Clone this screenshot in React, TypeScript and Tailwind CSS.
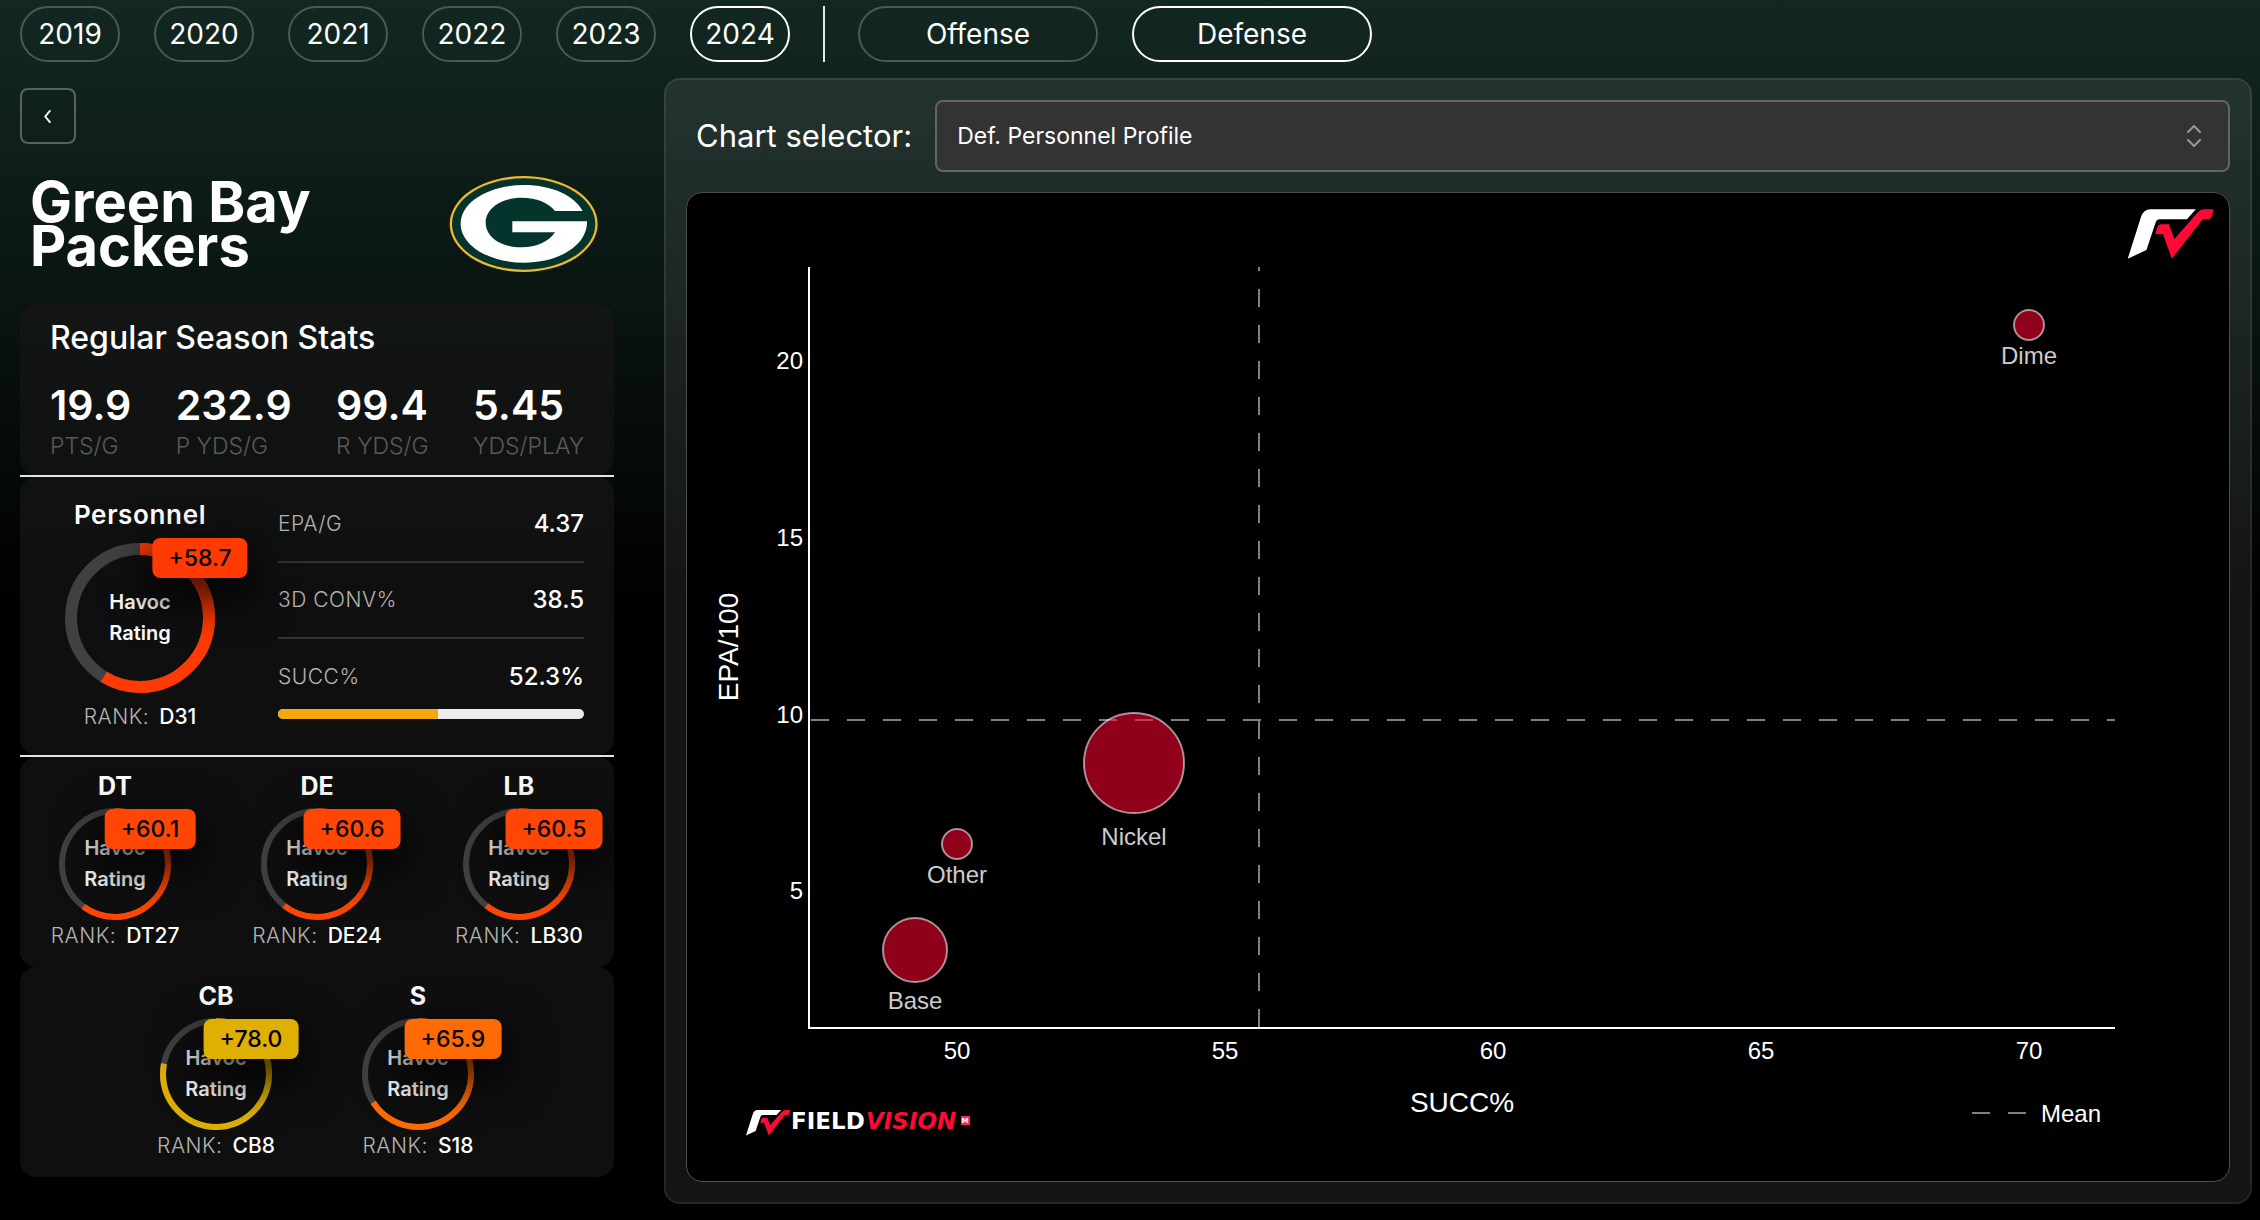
import { useState } from "react";

const YEARS = ["2019", "2020", "2021", "2022", "2023", "2024"];
const SIDES = ["Offense", "Defense"];

const SEASON_STATS = [
  { value: "19.9", label: "PTS/G" },
  { value: "232.9", label: "P YDS/G" },
  { value: "99.4", label: "R YDS/G" },
  { value: "5.45", label: "YDS/PLAY" },
];

const POSITIONS_FRONT = [
  { name: "DT", value: 60.1, rank: "DT27", color: "#ff4605" },
  { name: "DE", value: 60.6, rank: "DE24", color: "#ff4605" },
  { name: "LB", value: 60.5, rank: "LB30", color: "#ff4605" },
];

const POSITIONS_BACK = [
  { name: "CB", value: 78.0, rank: "CB8", color: "#dfaf04" },
  { name: "S", value: 65.9, rank: "S18", color: "#ff6a04" },
];

const BUBBLES = [
  { name: "Dime", x: 1342, y: 133, r: 15, labelY: 172 },
  { name: "Nickel", x: 447, y: 571, r: 50, labelY: 653 },
  { name: "Other", x: 270, y: 652, r: 15, labelY: 691 },
  { name: "Base", x: 228, y: 758, r: 32, labelY: 817 },
];

const X_TICKS = [
  { label: "50", x: 270 },
  { label: "55", x: 538 },
  { label: "60", x: 806 },
  { label: "65", x: 1074 },
  { label: "70", x: 1342 },
];

const Y_TICKS = [
  { label: "20", y: 177 },
  { label: "15", y: 354 },
  { label: "10", y: 531 },
  { label: "5", y: 707 },
];

const pillBase =
  "h-14 rounded-[28px] border-2 text-[28px] leading-8 text-white flex items-center justify-center shrink-0";

const card = "rounded-2xl bg-[#171717]/65";

function FvMark({ className }: { className?: string }) {
  return (
    <svg viewBox="262 416 262 152" className={className} aria-hidden="true">
      <FvShapes />
    </svg>
  );
}

function FvShapes() {
  return (
    <>
      <path
        fill="#fff"
        d="M263 567 L303 441 Q311 417 332 417 H470 L443 447 H360 Q351 447 348 456 L320 541 Z"
      />
      <path
        fill="#ff0a37"
        d="M347 492 L353 472 Q356 462 366 462 H388 L405 507 L476 426 Q484 417 494 417 H523 L520 436 Q517 447 505 447 H491 L397 567 L370 492 Z"
      />
    </>
  );
}

function PackersLogo() {
  return (
    <svg viewBox="0 0 504 348" className="h-[116px] w-[168px] shrink-0" role="img" aria-label="Green Bay Packers">
      <ellipse cx="251" cy="174" rx="222" ry="144" fill="#ecb731" />
      <ellipse cx="251" cy="174" rx="215" ry="137" fill="#04342c" />
      <path
        fill="#fff"
        d="M428 135 H345 C325 110 290 95 245 95 C182 95 137 128 137 170 C137 212 182 244 245 244 C290 244 327 226 345 199 H217 V166 H441 C443 236 358 290 252 290 C147 290 62 238 62 173 C62 108 147 57 252 57 C336 57 404 89 428 135 Z"
      />
    </svg>
  );
}

function Ring({
  size,
  stroke,
  value,
  color,
  badgeClass,
}: {
  size: number;
  stroke: number;
  value: number;
  color: string;
  badgeClass: string;
}) {
  const r = (size - stroke) / 2;
  const c = 2 * Math.PI * r;
  return (
    <div className="relative flex items-center justify-center">
      <svg width={size} height={size} viewBox={`0 0 ${size} ${size}`} aria-hidden="true">
        <circle cx={size / 2} cy={size / 2} r={r} fill="none" stroke="#414141" strokeWidth={stroke} />
        <circle
          cx={size / 2}
          cy={size / 2}
          r={r}
          fill="none"
          stroke={color}
          strokeWidth={stroke}
          strokeDasharray={`${(c * value) / 100} ${c}`}
          transform={`rotate(-90 ${size / 2} ${size / 2})`}
        />
      </svg>
      <div className="absolute inset-0 flex items-center justify-center text-center text-[20px] leading-[31px] font-semibold text-white">
        Havoc
        <br />
        Rating
      </div>
      <div
        className={`absolute flex h-10 -translate-x-1/2 items-center rounded-lg px-4 text-[23px] leading-8 font-medium text-black shadow-[0_16px_40px_8px_rgba(0,0,0,0.75)] ${badgeClass}`}
        style={{ backgroundColor: color }}
      >
        +{value.toFixed(1)}
      </div>
    </div>
  );
}

function Rank({ rank }: { rank: string }) {
  return (
    <p className="flex gap-2.5 text-[21px] leading-8 font-medium text-white">
      <span className="font-light tracking-wide text-[#b4b4b4]">RANK:</span>
      {rank}
    </p>
  );
}

function Position({ name, value, rank, color }: (typeof POSITIONS_FRONT)[number]) {
  return (
    <div className="flex shrink-0 basis-[34%] flex-col items-center pt-[13px]">
      <h3 className="mb-1.5 text-[25px] leading-8 font-bold text-white">{name}</h3>
      <Ring size={112} stroke={6} value={value} color={color} badgeClass="top-px left-[calc(50%+35px)]" />
      <Rank rank={rank} />
    </div>
  );
}

function Metric({ label, value }: { label: string; value: string }) {
  return (
    <div className="flex h-[76px] items-center justify-between">
      <dt className="text-[21px] leading-8 font-light tracking-wide text-[#b4b4b4]">{label}</dt>
      <dd className="text-[24px] leading-8 font-medium text-white">{value}</dd>
    </div>
  );
}

function BubbleChart() {
  return (
    <svg
      viewBox="0 1 1542 988"
      className="block h-auto w-full font-['Liberation_Sans',Arial,sans-serif]"
      role="img"
      aria-label="Defensive personnel profile: EPA/100 against success rate"
    >
      <g stroke="#808080" strokeWidth="2" strokeDasharray="18 18">
        <path d="M124 528 H1428" />
        <path d="M572 835 V75" />
        <path d="M1285 921 H1340" />
      </g>
      {BUBBLES.map((b) => (
        <g key={b.name}>
          <circle cx={b.x} cy={b.y} r={b.r} fill="#ff0030" fillOpacity="0.56" stroke="#fff" strokeOpacity="0.56" strokeWidth="2" />
          <text x={b.x} y={b.labelY} fontSize="24" fill="#cccccc" textAnchor="middle">
            {b.name}
          </text>
        </g>
      ))}
      <path d="M122 75 V836 H1428" fill="none" stroke="#fff" strokeWidth="2" />
      <g fontSize="24" fill="#fff">
        {X_TICKS.map((t) => (
          <text key={t.label} x={t.x} y="867" textAnchor="middle">
            {t.label}
          </text>
        ))}
        {Y_TICKS.map((t) => (
          <text key={t.label} x="116" y={t.y} textAnchor="end">
            {t.label}
          </text>
        ))}
        <text x="1354" y="930">
          Mean
        </text>
      </g>
      <g fontSize="28" fill="#fff" textAnchor="middle">
        <text x="775" y="920">
          SUCC%
        </text>
        <text transform="translate(51 455) rotate(-90)">EPA/100</text>
      </g>
      <g transform="translate(59 918) scale(0.17) translate(-263 -417)">
        <FvShapes />
      </g>
      <g fontFamily="DejaVu Sans, sans-serif" fontWeight="700">
        <text x="104" y="937" fontSize="23" fill="#fff">
          FIELD
        </text>
        <text x="179" y="937" fontSize="23" fontStyle="italic" fill="#ff0a37">
          VISION
        </text>
        <rect x="274" y="924" width="9" height="9" fill="#ff2a50" />
        <text x="278" y="931" fontSize="7" fill="#fff" textAnchor="middle">
          M
        </text>
      </g>
    </svg>
  );
}

export default function App() {
  const [year, setYear] = useState("2024");
  const [side, setSide] = useState("Defense");

  return (
    <div className="min-h-screen bg-black bg-[linear-gradient(to_bottom,#132822_0px,#000_610px)] bg-no-repeat pt-1.5 pb-4 font-['Inter',sans-serif] text-white">
      <nav className="flex items-center gap-[34px] pl-5">
        {YEARS.map((y) => (
          <button
            key={y}
            type="button"
            aria-pressed={y === year}
            onClick={() => setYear(y)}
            className={`${pillBase} w-[100px] ${y === year ? "border-white" : "border-[#4a5a55]"}`}
          >
            {y}
          </button>
        ))}
        <div className="-mx-px h-14 w-0.5 bg-[#e4e8e7]" />
        {SIDES.map((s) => (
          <button
            key={s}
            type="button"
            aria-pressed={s === side}
            onClick={() => setSide(s)}
            className={`${pillBase} w-60 ${s === side ? "border-white" : "border-[#4a5a55]"}`}
          >
            {s}
          </button>
        ))}
      </nav>

      <main className="mt-4 flex items-start gap-[50px] pr-2 pl-5">
        <aside className="w-[594px] shrink-0 pt-2.5">
          <button
            type="button"
            aria-label="Back"
            className="flex h-14 w-14 items-center justify-center rounded-lg border-2 border-[#56635f]"
          >
            <svg viewBox="0 0 10 16" className="h-[15px] w-2.5" fill="none" stroke="#fff" strokeWidth="2" aria-hidden="true">
              <path d="M7 2 L2 8 L7 14" strokeLinecap="round" strokeLinejoin="round" />
            </svg>
          </button>

          <header className="mt-[22px] mb-[22px] flex items-center justify-between pr-1.5 pl-2.5">
            <h1 className="text-[56px] leading-[44px] font-bold">
              Green Bay
              <br />
              Packers
            </h1>
            <PackersLogo />
          </header>

          <section className={`${card} h-[171px] px-[30px] pt-[18px]`}>
            <h2 className="text-[32px] leading-8 font-medium">Regular Season Stats</h2>
            <dl className="mt-6 flex justify-between">
              {SEASON_STATS.map((s) => (
                <div key={s.label} className="flex flex-col-reverse">
                  <dt className="text-[23px] leading-7 font-light text-[#5a5a5a]">{s.label}</dt>
                  <dd className="text-[41px] leading-[54px] font-semibold">{s.value}</dd>
                </div>
              ))}
            </dl>
          </section>

          <hr className="border-t-2 border-[#e4e6e6]" />

          <section className={`${card} flex h-[278px] px-[30px]`}>
            <div className="flex w-[180px] flex-col items-center pt-[22px]">
              <h2 className="mb-3 text-[26px] leading-8 font-semibold tracking-wide">Personnel</h2>
              <Ring size={150} stroke={12} value={58.7} color="#ff3a03" badgeClass="-top-[5px] left-[calc(50%+60px)]" />
              <div className="pt-2">
                <Rank rank="D31" />
              </div>
            </div>
            <dl className="ml-12 flex-1 divide-y-2 divide-[#333] pt-[10px]">
              <Metric label="EPA/G" value="4.37" />
              <Metric label="3D CONV%" value="38.5" />
              <div>
                <Metric label="SUCC%" value="52.3%" />
                <div className="-mt-1.5 h-2.5 overflow-hidden rounded-full bg-[#ececee]">
                  <div className="h-full bg-[#f4a80c]" style={{ width: "52.3%" }} />
                </div>
              </div>
            </dl>
          </section>

          <hr className="border-t-2 border-[#e4e4e6]" />

          <section className={`${card} flex h-[210px] justify-center`}>
            {POSITIONS_FRONT.map((p) => (
              <Position key={p.name} {...p} />
            ))}
          </section>
          <section className={`${card} flex h-[210px] justify-center`}>
            {POSITIONS_BACK.map((p) => (
              <Position key={p.name} {...p} />
            ))}
          </section>
        </aside>

        <section className="min-w-0 flex-1 rounded-2xl border-2 border-white/15 bg-white/8 bg-clip-padding p-5">
          <div className="flex items-center gap-[23px] pl-2.5">
            <label htmlFor="chart" className="shrink-0 text-[31px] leading-8">
              Chart selector:
            </label>
            <div className="relative flex-1">
              <select
                id="chart"
                className="h-[72px] w-full appearance-none rounded-lg border-2 border-[#636564] bg-[#333] pr-16 pl-5 text-[23px] text-white"
              >
                <option>Def. Personnel Profile</option>
              </select>
              <svg
                viewBox="0 0 16 24"
                className="pointer-events-none absolute top-6 right-7 h-6 w-4"
                fill="none"
                stroke="#999"
                strokeWidth="2"
                strokeLinecap="round"
                strokeLinejoin="round"
                aria-hidden="true"
              >
                <path d="M2 8 L8 2 L14 8 M2 16 L8 22 L14 16" />
              </svg>
            </div>
          </div>

          <div className="relative mt-5 overflow-hidden rounded-2xl border border-[#4c4f4e] bg-black">
            <BubbleChart />
            <FvMark className="absolute top-4 right-[15px] h-[50px] w-[87px]" />
          </div>
        </section>
      </main>
    </div>
  );
}
